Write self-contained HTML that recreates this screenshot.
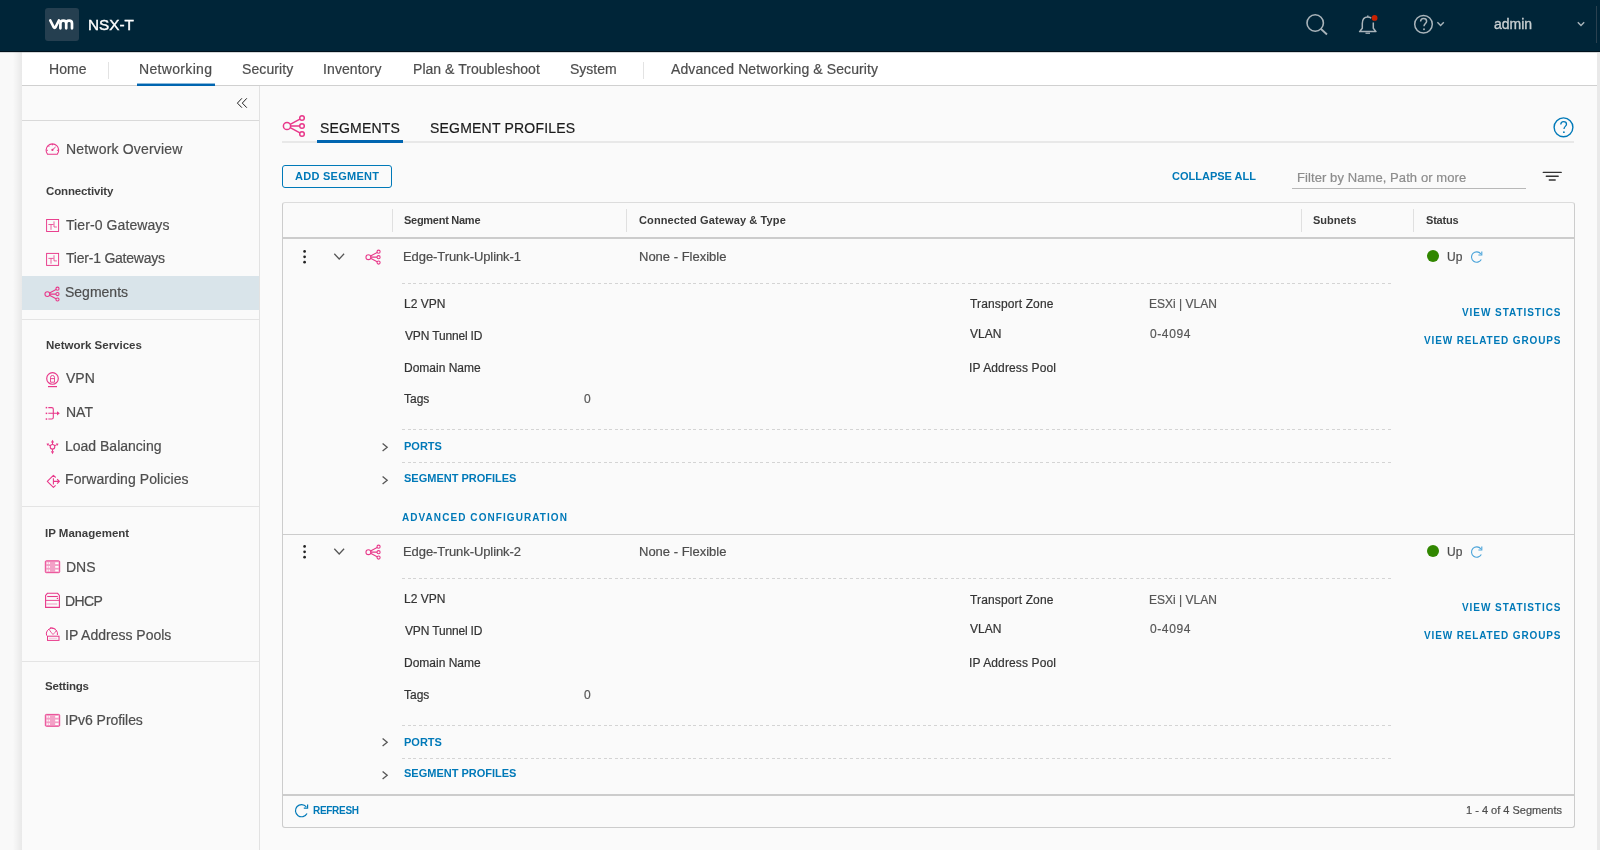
<!DOCTYPE html>
<html><head><meta charset="utf-8"><style>
html,body{margin:0;padding:0;}
body{width:1600px;height:850px;overflow:hidden;position:relative;background:#fafafa;font-family:"Liberation Sans",sans-serif;}
.t{position:absolute;white-space:nowrap;line-height:1;will-change:transform;}
.r{position:absolute;display:block;}
</style></head><body>
<div class="r" style="left:0px;top:0px;width:1600px;height:51px;background:#002538;"></div>
<div class="r" style="left:0px;top:51px;width:1600px;height:1px;background:#00111c;"></div>
<div class="r" style="left:45px;top:8px;width:34px;height:33px;background:#253f50;border-radius:3px;"></div>
<svg class="r" style="left:44px;top:14px" width="36" height="20" viewBox="44 14 36 20"><path d="M50.3 20.5 L53.6 27 Q54.6 28.6 55.6 27 L58.9 20.5" fill="none" stroke="#fff" stroke-width="2.7" stroke-linecap="round" stroke-linejoin="round"/><path d="M60.4 28.3 V23.4 Q60.4 20.6 63.3 20.6 Q66.2 20.6 66.2 23.4 V28.3 M66.2 23.4 Q66.2 20.6 69.1 20.6 Q72 20.6 72 23.4 V28.3" fill="none" stroke="#fff" stroke-width="2.7" stroke-linecap="round"/></svg>
<div class="t" style="top:16.55px;font-size:15.3px;color:#ffffff;left:87.50px;-webkit-text-stroke:0.4px #fff;">NSX-T</div>
<svg class="r" style="left:1300px;top:8px" width="36" height="32" viewBox="1300 8 36 32"><circle cx="1315.2" cy="23" r="8.2" fill="none" stroke="#a9b4ba" stroke-width="1.6"/><line x1="1321" y1="29" x2="1327" y2="34.5" stroke="#a9b4ba" stroke-width="1.8"/></svg>
<svg class="r" style="left:1350px;top:8px" width="36" height="32" viewBox="1350 8 36 32"><path d="M1367.8 15.6 V16.9 M1371.2 18.2 C1370.2 17.4 1369.1 17 1367.8 17 C1364.2 17 1362.3 19.8 1362.3 23.6 V28.2 L1359.6 31.6 H1376 L1373.3 28.2 V22.6" fill="none" stroke="#a9b4ba" stroke-width="1.5" stroke-linejoin="round"/><line x1="1365.5" y1="33.2" x2="1370" y2="33.2" stroke="#a9b4ba" stroke-width="1.3"/><circle cx="1374.6" cy="17.9" r="2.9" fill="#c92100"/></svg>
<svg class="r" style="left:1405px;top:8px" width="45" height="32" viewBox="1405 8 45 32"><circle cx="1423.5" cy="24.3" r="8.8" fill="none" stroke="#a9b4ba" stroke-width="1.5"/><path d="M1420.6 21.6 C1420.6 19.4 1422 18.5 1423.6 18.5 C1425.4 18.5 1426.6 19.7 1426.6 21.2 C1426.6 23.4 1424 23.6 1424 26.2" fill="none" stroke="#a9b4ba" stroke-width="1.5"/><circle cx="1424" cy="29.2" r="0.95" fill="#a9b4ba"/><path d="M1437.4 22.3 L1440.6 25.6 L1443.8 22.3" fill="none" stroke="#a9b4ba" stroke-width="1.4"/></svg>
<div class="t" style="top:17.05px;font-size:14px;color:#c7ced1;left:1493.50px;-webkit-text-stroke:0.35px #c7ced1;">admin</div>
<svg class="r" style="left:1570px;top:15px" width="20" height="20" viewBox="1570 15 20 20"><path d="M1577.8 22.2 L1581 25.6 L1584.2 22.2" fill="none" stroke="#a9b4ba" stroke-width="1.4"/></svg>
<div class="r" style="left:1596px;top:6px;width:1px;height:37px;background:#2a4150;"></div>
<div class="r" style="left:0px;top:52px;width:22px;height:798px;background:#f9f9f9;"></div>
<div class="r" style="left:1597px;top:52px;width:3px;height:798px;background:#e9e9e9;"></div>
<div class="r" style="left:22px;top:52px;width:1575px;height:33px;background:#ffffff;"></div>
<div class="r" style="left:0px;top:52px;width:1600px;height:1px;background:#d4d8d9;"></div>
<div class="r" style="left:22px;top:85px;width:1575px;height:1px;background:#d0d0d0;"></div>
<div class="r" style="left:22px;top:86px;width:1575px;height:764px;background:#fafafa;"></div>
<div class="r" style="left:13px;top:52px;width:9px;height:798px;background:linear-gradient(to right, rgba(0,0,0,0), rgba(0,0,0,0.065));"></div>
<div class="t" style="top:62.15px;font-size:14px;color:#4d4d4d;-webkit-text-stroke:0.2px #4d4d4d;letter-spacing:0.1px;left:48.50px;">Home</div>
<div class="t" style="top:62.15px;font-size:14px;color:#4d4d4d;-webkit-text-stroke:0.2px #4d4d4d;letter-spacing:0.33px;left:139.10px;">Networking</div>
<div class="t" style="top:62.15px;font-size:14px;color:#4d4d4d;-webkit-text-stroke:0.2px #4d4d4d;letter-spacing:0.1px;left:242.00px;">Security</div>
<div class="t" style="top:62.15px;font-size:14px;color:#4d4d4d;-webkit-text-stroke:0.2px #4d4d4d;letter-spacing:0.1px;left:323.20px;">Inventory</div>
<div class="t" style="top:62.15px;font-size:14px;color:#4d4d4d;-webkit-text-stroke:0.2px #4d4d4d;letter-spacing:0.04px;left:412.60px;">Plan &amp; Troubleshoot</div>
<div class="t" style="top:62.15px;font-size:14px;color:#4d4d4d;-webkit-text-stroke:0.2px #4d4d4d;left:570.00px;">System</div>
<div class="t" style="top:62.15px;font-size:14px;color:#4d4d4d;-webkit-text-stroke:0.2px #4d4d4d;letter-spacing:0.11px;left:670.80px;">Advanced Networking &amp; Security</div>
<div class="r" style="left:108px;top:62px;width:1px;height:17px;background:#e3e3e3;"></div>
<div class="r" style="left:643px;top:62px;width:1px;height:17px;background:#e3e3e3;"></div>
<div class="r" style="left:137px;top:84px;width:78px;height:2px;background:#0065b0;"></div>
<div class="r" style="left:137px;top:83px;width:78px;height:1px;background:rgba(0,101,176,0.45);"></div>
<div class="r" style="left:259px;top:86px;width:1px;height:764px;background:#e2e2e2;"></div>
<div class="r" style="left:22px;top:120px;width:237px;height:1px;background:#d9d9d9;"></div>
<svg class="r" style="left:230px;top:93px" width="22" height="20" viewBox="230 93 22 20"><path d="M241.9 98.3 L237.4 103.1 L241.9 107.7 M246.8 98.3 L242.3 103.1 L246.8 107.7" fill="none" stroke="#222" stroke-width="1.0"/></svg>
<div class="r" style="left:22px;top:276px;width:237px;height:34px;background:#d9e4ea;"></div>
<svg class="r" style="left:44.46px;top:285.56px" width="16.2" height="16.2" viewBox="0 0 24 24"><g fill="none" stroke="#e8388a" stroke-width="1.6"><circle cx="5" cy="12" r="3.6"/><circle cx="20" cy="4" r="2.3"/><circle cx="20" cy="12" r="2.3"/><circle cx="20" cy="20" r="2.3"/><path d="M8.2 10.3 L17.9 5.1 M8.6 12 L17.7 12 M8.2 13.7 L17.9 18.9"/></g></svg>
<div class="r" style="left:22px;top:319px;width:237px;height:1px;background:#e4e4e4;"></div>
<div class="r" style="left:22px;top:506px;width:237px;height:1px;background:#e4e4e4;"></div>
<div class="r" style="left:22px;top:661px;width:237px;height:1px;background:#e4e4e4;"></div>
<div class="t" style="top:141.95px;font-size:14px;color:#4d4d4d;-webkit-text-stroke:0.2px #4d4d4d;letter-spacing:0.19px;left:65.50px;">Network Overview</div>
<div class="t" style="top:185.97px;font-size:11.5px;color:#3d3d3d;font-weight:700;letter-spacing:-0.15px;left:46.00px;">Connectivity</div>
<div class="t" style="top:217.55px;font-size:14px;color:#4d4d4d;-webkit-text-stroke:0.2px #4d4d4d;letter-spacing:0.09px;left:66.10px;">Tier-0 Gateways</div>
<div class="t" style="top:251.35px;font-size:14px;color:#4d4d4d;-webkit-text-stroke:0.2px #4d4d4d;letter-spacing:-0.22px;left:66.10px;">Tier-1 Gateways</div>
<div class="t" style="top:285.15px;font-size:14px;color:#4d4d4d;-webkit-text-stroke:0.2px #4d4d4d;left:65.20px;">Segments</div>
<div class="t" style="top:339.67px;font-size:11.5px;color:#3d3d3d;font-weight:700;left:45.60px;">Network Services</div>
<div class="t" style="top:371.45px;font-size:14px;color:#4d4d4d;-webkit-text-stroke:0.2px #4d4d4d;left:66.00px;">VPN</div>
<div class="t" style="top:405.15px;font-size:14px;color:#4d4d4d;-webkit-text-stroke:0.2px #4d4d4d;left:66.00px;">NAT</div>
<div class="t" style="top:438.65px;font-size:14px;color:#4d4d4d;-webkit-text-stroke:0.2px #4d4d4d;left:65.20px;">Load Balancing</div>
<div class="t" style="top:472.15px;font-size:14px;color:#4d4d4d;-webkit-text-stroke:0.2px #4d4d4d;letter-spacing:0.08px;left:65.20px;">Forwarding Policies</div>
<div class="t" style="top:527.57px;font-size:11.5px;color:#3d3d3d;font-weight:700;left:44.60px;">IP Management</div>
<div class="t" style="top:559.95px;font-size:14px;color:#4d4d4d;-webkit-text-stroke:0.2px #4d4d4d;left:65.90px;">DNS</div>
<div class="t" style="top:593.55px;font-size:14px;color:#4d4d4d;-webkit-text-stroke:0.2px #4d4d4d;letter-spacing:-0.6px;left:65.00px;">DHCP</div>
<div class="t" style="top:627.75px;font-size:14px;color:#4d4d4d;-webkit-text-stroke:0.2px #4d4d4d;left:65.00px;">IP Address Pools</div>
<div class="t" style="top:681.27px;font-size:11.5px;color:#3d3d3d;font-weight:700;letter-spacing:-0.2px;left:45.40px;">Settings</div>
<div class="t" style="top:713.45px;font-size:14px;color:#4d4d4d;-webkit-text-stroke:0.2px #4d4d4d;letter-spacing:-0.06px;left:65.20px;">IPv6 Profiles</div>
<div class="r" style="left:282px;top:141px;width:1292px;height:2px;background:#e8e8e8;"></div>
<div class="r" style="left:317px;top:140px;width:86px;height:3px;background:#0065b0;"></div>
<div class="t" style="top:121.05px;font-size:14px;color:#1b1b1b;-webkit-text-stroke:0.2px #1b1b1b;letter-spacing:0.17px;left:320.20px;">SEGMENTS</div>
<div class="t" style="top:121.05px;font-size:14px;color:#1b1b1b;-webkit-text-stroke:0.2px #1b1b1b;letter-spacing:0.2px;left:430.00px;">SEGMENT PROFILES</div>
<svg class="r" style="left:1550px;top:114px" width="28" height="28" viewBox="1550 114 28 28"><circle cx="1563.5" cy="127.3" r="9.4" fill="none" stroke="#0079b8" stroke-width="1.4"/><path d="M1560.8 124.6 C1560.8 122.4 1562.2 121.6 1563.6 121.6 C1565.3 121.6 1566.5 122.8 1566.5 124.2 C1566.5 126.4 1564 126.4 1564 128.9" fill="none" stroke="#0079b8" stroke-width="1.3"/><circle cx="1563.9" cy="132.2" r="0.9" fill="#0079b8"/></svg>
<div class="r" style="left:282px;top:165px;width:108px;height:21px;border:1px solid #0079b8;border-radius:3px"></div>
<div class="t" style="top:170.99px;font-size:11px;color:#0079b8;font-weight:700;letter-spacing:0.27px;left:294.50px;">ADD SEGMENT</div>
<div class="t" style="top:170.79px;font-size:11px;color:#0079b8;font-weight:700;left:1171.50px;">COLLAPSE ALL</div>
<div class="t" style="top:170.70px;font-size:13px;color:#8c8c8c;-webkit-text-stroke:0.2px #8c8c8c;letter-spacing:0.085px;left:1297.00px;">Filter by Name, Path or more</div>
<div class="r" style="left:1292px;top:188px;width:234px;height:1px;background:#b8b8b8;"></div>
<svg class="r" style="left:1538px;top:166px" width="28" height="20" viewBox="1538 166 28 20"><path d="M1543.3 172.4 H1561.2 M1546.3 176.2 H1558.2 M1549.3 180 H1555.2" stroke="#333" stroke-width="1.4" stroke-linecap="round"/></svg>
<div class="r" style="left:282px;top:202px;width:1291px;height:624px;border:1px solid #cccccc;border-top-color:#dcdcdc;border-radius:3px"></div>
<div class="r" style="left:283px;top:237px;width:1291px;height:2px;background:#cccccc;"></div>
<div class="r" style="left:392px;top:209px;width:1px;height:23px;background:#e0e0e0;"></div>
<div class="r" style="left:626px;top:209px;width:1px;height:23px;background:#e0e0e0;"></div>
<div class="r" style="left:1301px;top:209px;width:1px;height:23px;background:#e0e0e0;"></div>
<div class="r" style="left:1413px;top:209px;width:1px;height:23px;background:#e0e0e0;"></div>
<div class="t" style="top:214.69px;font-size:11px;color:#3a3a3a;font-weight:700;letter-spacing:-0.27px;left:404.45px;">Segment Name</div>
<div class="t" style="top:214.69px;font-size:11px;color:#3a3a3a;font-weight:700;letter-spacing:0.12px;left:638.55px;">Connected Gateway &amp; Type</div>
<div class="t" style="top:214.69px;font-size:11px;color:#3a3a3a;font-weight:700;left:1313.10px;">Subnets</div>
<div class="t" style="top:214.69px;font-size:11px;color:#3a3a3a;font-weight:700;letter-spacing:-0.2px;left:1426.20px;">Status</div>
<div class="r" style="left:283px;top:534px;width:1291px;height:1px;background:#cccccc;"></div>
<div class="r" style="left:283px;top:794px;width:1291px;height:2px;background:#cccccc;"></div>
<svg class="r" style="left:300px;top:248px" width="10" height="18" viewBox="300 248 10 18"><g fill="#222"><circle cx="304.6" cy="251.4" r="1.35"/><circle cx="304.6" cy="256.8" r="1.35"/><circle cx="304.6" cy="262.2" r="1.35"/></g></svg>
<svg class="r" style="left:330px;top:248px" width="18" height="16" viewBox="330 248 18 16"><path d="M334.3 253.8 L339.2 259 L344.1 253.8" fill="none" stroke="#565656" stroke-width="1.3"/></svg>
<svg class="r" style="left:365.06px;top:248.65px" width="16.3" height="16.3" viewBox="0 0 24 24"><g fill="none" stroke="#e8388a" stroke-width="1.6"><circle cx="5" cy="12" r="3.6"/><circle cx="20" cy="4" r="2.3"/><circle cx="20" cy="12" r="2.3"/><circle cx="20" cy="20" r="2.3"/><path d="M8.2 10.3 L17.9 5.1 M8.6 12 L17.7 12 M8.2 13.7 L17.9 18.9"/></g></svg>
<div class="t" style="top:249.70px;font-size:13px;color:#4d4d4d;-webkit-text-stroke:0.2px #4d4d4d;letter-spacing:-0.08px;left:403.45px;">Edge-Trunk-Uplink-1</div>
<div class="t" style="top:249.70px;font-size:13px;color:#4d4d4d;-webkit-text-stroke:0.2px #4d4d4d;left:638.75px;">None - Flexible</div>
<div class="r" style="left:1427.2px;top:249.7px;width:12px;height:12px;background:#318700;border-radius:50%;"></div>
<div class="t" style="top:250.74px;font-size:12px;color:#4d4d4d;-webkit-text-stroke:0.2px #4d4d4d;letter-spacing:0.15px;left:1447.30px;">Up</div>
<svg class="r" style="left:1467.2px;top:249px" width="18" height="16" viewBox="1468 249 18 16"><path d="M1481.8 253.8 A5.2 5.2 0 1 0 1482.3 259.5" fill="none" stroke="#49a3d9" stroke-width="1.1"/><path d="M1482.8 251.6 L1482.8 255 L1479.4 255" fill="none" stroke="#49a3d9" stroke-width="1.1"/></svg>
<div class="r" style="left:402px;top:283px;width:991px;height:1px;background:repeating-linear-gradient(to right,#d4d4d4 0,#d4d4d4 3px,transparent 3px,transparent 5.6px);"></div>
<div class="t" style="top:298.14px;font-size:12px;color:#333333;-webkit-text-stroke:0.2px #333333;left:403.60px;">L2 VPN</div>
<div class="t" style="top:329.74px;font-size:12px;color:#333333;-webkit-text-stroke:0.2px #333333;letter-spacing:-0.16px;left:404.60px;">VPN Tunnel ID</div>
<div class="t" style="top:361.84px;font-size:12px;color:#333333;-webkit-text-stroke:0.2px #333333;left:403.60px;">Domain Name</div>
<div class="t" style="top:393.34px;font-size:12px;color:#333333;-webkit-text-stroke:0.2px #333333;left:404.30px;">Tags</div>
<div class="t" style="top:393.34px;font-size:12px;color:#565656;-webkit-text-stroke:0.2px #565656;left:584.20px;">0</div>
<div class="t" style="top:298.24px;font-size:12px;color:#333333;-webkit-text-stroke:0.2px #333333;letter-spacing:0.14px;left:970.40px;">Transport Zone</div>
<div class="t" style="top:298.24px;font-size:12px;color:#565656;-webkit-text-stroke:0.2px #565656;left:1148.80px;">ESXi | VLAN</div>
<div class="t" style="top:327.94px;font-size:12px;color:#333333;-webkit-text-stroke:0.2px #333333;left:970.20px;">VLAN</div>
<div class="t" style="top:327.94px;font-size:12px;color:#565656;-webkit-text-stroke:0.2px #565656;letter-spacing:0.6px;left:1149.90px;">0-4094</div>
<div class="t" style="top:361.74px;font-size:12px;color:#333333;-webkit-text-stroke:0.2px #333333;letter-spacing:0.13px;left:969.20px;">IP Address Pool</div>
<div class="t" style="top:307.54px;font-size:10px;color:#0079b8;font-weight:700;letter-spacing:0.95px;right:38.40px;">VIEW STATISTICS</div>
<div class="t" style="top:335.64px;font-size:10px;color:#0079b8;font-weight:700;letter-spacing:0.86px;right:38.40px;">VIEW RELATED GROUPS</div>
<div class="r" style="left:402px;top:429px;width:991px;height:1px;background:repeating-linear-gradient(to right,#d4d4d4 0,#d4d4d4 3px,transparent 3px,transparent 5.6px);"></div>
<div class="r" style="left:402px;top:462px;width:991px;height:1px;background:repeating-linear-gradient(to right,#d4d4d4 0,#d4d4d4 3px,transparent 3px,transparent 5.6px);"></div>
<svg class="r" style="left:378px;top:441px" width="14" height="14" viewBox="378 441 14 14"><path d="M382.6 443.4 L387.2 447.2 L382.6 451" fill="none" stroke="#565656" stroke-width="1.3"/></svg>
<svg class="r" style="left:378px;top:473.8px" width="14" height="14" viewBox="378 473.8 14 14"><path d="M382.6 476.2 L387.2 480.0 L382.6 483.8" fill="none" stroke="#565656" stroke-width="1.3"/></svg>
<div class="t" style="top:440.59px;font-size:11px;color:#0079b8;font-weight:700;left:404.30px;">PORTS</div>
<div class="t" style="top:473.09px;font-size:11px;color:#0079b8;font-weight:700;left:404.30px;">SEGMENT PROFILES</div>
<div class="t" style="top:512.53px;font-size:10px;color:#0079b8;font-weight:700;letter-spacing:1.07px;left:402.20px;">ADVANCED CONFIGURATION</div>
<svg class="r" style="left:300px;top:543.3px" width="10" height="18" viewBox="300 248 10 18"><g fill="#222"><circle cx="304.6" cy="251.4" r="1.35"/><circle cx="304.6" cy="256.8" r="1.35"/><circle cx="304.6" cy="262.2" r="1.35"/></g></svg>
<svg class="r" style="left:330px;top:543.3px" width="18" height="16" viewBox="330 248 18 16"><path d="M334.3 253.8 L339.2 259 L344.1 253.8" fill="none" stroke="#565656" stroke-width="1.3"/></svg>
<svg class="r" style="left:365.06px;top:543.95px" width="16.3" height="16.3" viewBox="0 0 24 24"><g fill="none" stroke="#e8388a" stroke-width="1.6"><circle cx="5" cy="12" r="3.6"/><circle cx="20" cy="4" r="2.3"/><circle cx="20" cy="12" r="2.3"/><circle cx="20" cy="20" r="2.3"/><path d="M8.2 10.3 L17.9 5.1 M8.6 12 L17.7 12 M8.2 13.7 L17.9 18.9"/></g></svg>
<div class="t" style="top:545.00px;font-size:13px;color:#4d4d4d;-webkit-text-stroke:0.2px #4d4d4d;letter-spacing:-0.08px;left:403.45px;">Edge-Trunk-Uplink-2</div>
<div class="t" style="top:545.00px;font-size:13px;color:#4d4d4d;-webkit-text-stroke:0.2px #4d4d4d;left:638.75px;">None - Flexible</div>
<div class="r" style="left:1427.2px;top:545.0px;width:12px;height:12px;background:#318700;border-radius:50%;"></div>
<div class="t" style="top:546.04px;font-size:12px;color:#4d4d4d;-webkit-text-stroke:0.2px #4d4d4d;letter-spacing:0.15px;left:1447.30px;">Up</div>
<svg class="r" style="left:1467.2px;top:544.3px" width="18" height="16" viewBox="1468 249 18 16"><path d="M1481.8 253.8 A5.2 5.2 0 1 0 1482.3 259.5" fill="none" stroke="#49a3d9" stroke-width="1.1"/><path d="M1482.8 251.6 L1482.8 255 L1479.4 255" fill="none" stroke="#49a3d9" stroke-width="1.1"/></svg>
<div class="r" style="left:402px;top:578.3px;width:991px;height:1px;background:repeating-linear-gradient(to right,#d4d4d4 0,#d4d4d4 3px,transparent 3px,transparent 5.6px);"></div>
<div class="t" style="top:593.44px;font-size:12px;color:#333333;-webkit-text-stroke:0.2px #333333;left:403.60px;">L2 VPN</div>
<div class="t" style="top:625.04px;font-size:12px;color:#333333;-webkit-text-stroke:0.2px #333333;letter-spacing:-0.16px;left:404.60px;">VPN Tunnel ID</div>
<div class="t" style="top:657.14px;font-size:12px;color:#333333;-webkit-text-stroke:0.2px #333333;left:403.60px;">Domain Name</div>
<div class="t" style="top:688.64px;font-size:12px;color:#333333;-webkit-text-stroke:0.2px #333333;left:404.30px;">Tags</div>
<div class="t" style="top:688.64px;font-size:12px;color:#565656;-webkit-text-stroke:0.2px #565656;left:584.20px;">0</div>
<div class="t" style="top:593.54px;font-size:12px;color:#333333;-webkit-text-stroke:0.2px #333333;letter-spacing:0.14px;left:970.40px;">Transport Zone</div>
<div class="t" style="top:593.54px;font-size:12px;color:#565656;-webkit-text-stroke:0.2px #565656;left:1148.80px;">ESXi | VLAN</div>
<div class="t" style="top:623.24px;font-size:12px;color:#333333;-webkit-text-stroke:0.2px #333333;left:970.20px;">VLAN</div>
<div class="t" style="top:623.24px;font-size:12px;color:#565656;-webkit-text-stroke:0.2px #565656;letter-spacing:0.6px;left:1149.90px;">0-4094</div>
<div class="t" style="top:657.04px;font-size:12px;color:#333333;-webkit-text-stroke:0.2px #333333;letter-spacing:0.13px;left:969.20px;">IP Address Pool</div>
<div class="t" style="top:602.83px;font-size:10px;color:#0079b8;font-weight:700;letter-spacing:0.95px;right:38.40px;">VIEW STATISTICS</div>
<div class="t" style="top:630.94px;font-size:10px;color:#0079b8;font-weight:700;letter-spacing:0.86px;right:38.40px;">VIEW RELATED GROUPS</div>
<div class="r" style="left:402px;top:725px;width:991px;height:1px;background:repeating-linear-gradient(to right,#d4d4d4 0,#d4d4d4 3px,transparent 3px,transparent 5.6px);"></div>
<div class="r" style="left:402px;top:758px;width:991px;height:1px;background:repeating-linear-gradient(to right,#d4d4d4 0,#d4d4d4 3px,transparent 3px,transparent 5.6px);"></div>
<svg class="r" style="left:378px;top:736.3px" width="14" height="14" viewBox="378 441 14 14"><path d="M382.6 443.4 L387.2 447.2 L382.6 451" fill="none" stroke="#565656" stroke-width="1.3"/></svg>
<svg class="r" style="left:378px;top:769.1px" width="14" height="14" viewBox="378 473.8 14 14"><path d="M382.6 476.2 L387.2 480.0 L382.6 483.8" fill="none" stroke="#565656" stroke-width="1.3"/></svg>
<div class="t" style="top:736.59px;font-size:11px;color:#0079b8;font-weight:700;left:404.30px;">PORTS</div>
<div class="t" style="top:768.39px;font-size:11px;color:#0079b8;font-weight:700;left:404.30px;">SEGMENT PROFILES</div>
<svg class="r" style="left:292px;top:801px" width="20" height="20" viewBox="292 801 20 20"><path d="M306.3 806.8 A6.1 6.1 0 1 0 307 813.4" fill="none" stroke="#0079b8" stroke-width="1.2"/><path d="M307.6 804.4 L307.6 808.2 L303.8 808.2" fill="none" stroke="#0079b8" stroke-width="1.2"/></svg>
<div class="t" style="top:805.63px;font-size:10px;color:#0079b8;font-weight:700;letter-spacing:-0.3px;left:313.20px;">REFRESH</div>
<div class="t" style="top:805.09px;font-size:11px;color:#4d4d4d;-webkit-text-stroke:0.2px #4d4d4d;right:37.70px;">1 - 4 of 4 Segments</div>
<svg class="r" style="left:281.55px;top:114.35px" width="24" height="24" viewBox="0 0 24 24"><g fill="none" stroke="#e8388a" stroke-width="1.5"><circle cx="5" cy="12" r="3.6"/><circle cx="20" cy="4" r="2.3"/><circle cx="20" cy="12" r="2.3"/><circle cx="20" cy="20" r="2.3"/><path d="M8.2 10.3 L17.9 5.1 M8.6 12 L17.7 12 M8.2 13.7 L17.9 18.9"/></g></svg>
<svg class="r" style="left:30px;top:130px" width="40" height="620" viewBox="30 130 40 620"><path d="M47.6 154.3 A6.3 6.3 0 1 1 57.2 154.3 Z" fill="none" stroke="#e8388a" stroke-width="1.1" stroke-linejoin="round"/><path d="M52.4 149.9 L55.6 147.0" stroke="#e8388a" stroke-width="1"/><circle cx="52.4" cy="149.9" r="1.1" fill="#e8388a"/><path d="M52.4 144 V145.3 M46.6 150.3 H47.9 M56.9 150.3 H58.2 M48.3 145.9 L49.2 146.8" stroke="#e8388a" stroke-width="1"/><g transform="translate(0,0)" fill="none" stroke="#e8388a" stroke-width="0.95"><rect x="46.6" y="219.5" width="12" height="12"/><path d="M48.4 224.5 H53.6 M51 224.5 V229.8 M54 221.4 V227 H56.9" stroke-width="0.8"/></g><g transform="translate(0,33.9)" fill="none" stroke="#e8388a" stroke-width="0.95"><rect x="46.6" y="219.5" width="12" height="12"/><path d="M48.4 224.5 H53.6 M51 224.5 V229.8 M54 221.4 V227 H56.9" stroke-width="0.8"/></g><circle cx="52.5" cy="378.4" r="5.8" fill="none" stroke="#e8388a" stroke-width="1.15"/><path d="M50.5 382.2 V377.3 Q50.5 375.5 52.5 375.5 Q54.5 375.5 54.5 377.3 V382.2 Z M50.5 378.6 H54.5" fill="none" stroke="#e8388a" stroke-width="0.9"/><path d="M48 386.6 H57" stroke="#e8388a" stroke-width="1.2"/><g fill="#e8388a"><rect x="45.7" y="406.9" width="1.5" height="1.5"/><rect x="45.7" y="412.6" width="1.5" height="1.5"/><rect x="45.7" y="418.3" width="1.5" height="1.5"/></g><path d="M48.3 407.6 H51.8 Q53.3 407.6 53.3 409.1 V417.5 Q53.3 419 51.8 419 H48.3 M48.3 413.3 H57.6" fill="none" stroke="#e8388a" stroke-width="1.1"/><path d="M57 411.2 L59.8 413.3 L57 415.4 Z" fill="#e8388a"/><circle cx="52.5" cy="446.8" r="2.3" fill="none" stroke="#e8388a" stroke-width="1.1"/><path d="M52.5 444.5 V442 M52.5 449.1 V451.5 M50.4 445.8 L48.2 444.7 M54.6 445.8 L56.8 444.7" stroke="#e8388a" stroke-width="1"/><path d="M50.9 442.4 L52.5 439.8 L54.1 442.4 Z M50.9 451.2 L52.5 454.3 L54.1 451.2 Z M48.9 443.3 L46.4 443.8 L47.9 446 Z M56.1 443.3 L58.6 443.8 L57.1 446 Z" fill="#e8388a"/><path d="M55.7 477.5 L53.4 475.3 L47.3 481.4 L53.4 487.4 L55.6 485.3 M53.4 478.3 V484.6 M53.4 481.4 H59.2 M57.1 479.1 L59.4 481.4 L57.1 483.7" fill="none" stroke="#e8388a" stroke-width="1.1" stroke-linejoin="round"/><g transform="translate(0,0)"><rect x="45.3" y="560.8" width="14.4" height="11.9" rx="1" fill="#f3a1c7" stroke="#e8388a" stroke-width="0.9"/><g fill="#ffffff"><rect x="46.6" y="562.3" width="1.2" height="1.8"/><rect x="48.6" y="562.3" width="1.3" height="1.8"/><rect x="55.2" y="562.3" width="3.3" height="1.8"/><rect x="46.6" y="566.0" width="1.2" height="1.8"/><rect x="48.6" y="566.0" width="1.3" height="1.8"/><rect x="55.2" y="566.0" width="3.3" height="1.8"/><rect x="46.6" y="569.6" width="1.2" height="1.8"/><rect x="48.6" y="569.6" width="1.3" height="1.8"/><rect x="55.2" y="569.6" width="3.3" height="1.8"/></g></g><g transform="translate(0,153.6)"><rect x="45.3" y="560.8" width="14.4" height="11.9" rx="1" fill="#f3a1c7" stroke="#e8388a" stroke-width="0.9"/><g fill="#ffffff"><rect x="46.6" y="562.3" width="1.2" height="1.8"/><rect x="48.6" y="562.3" width="1.3" height="1.8"/><rect x="55.2" y="562.3" width="3.3" height="1.8"/><rect x="46.6" y="566.0" width="1.2" height="1.8"/><rect x="48.6" y="566.0" width="1.3" height="1.8"/><rect x="55.2" y="566.0" width="3.3" height="1.8"/><rect x="46.6" y="569.6" width="1.2" height="1.8"/><rect x="48.6" y="569.6" width="1.3" height="1.8"/><rect x="55.2" y="569.6" width="3.3" height="1.8"/></g></g><path d="M45.6 607.4 V595.4 L47.4 593.3 H57.6 L59.4 595.4 V607.4 Z" fill="none" stroke="#e8388a" stroke-width="1.1"/><path d="M47.2 596.5 H57.8" stroke="#e8388a" stroke-width="1.1"/><path d="M45.6 600.4 H59.4" stroke="#e8388a" stroke-width="0.9"/><rect x="46.2" y="603.2" width="11" height="1.6" fill="#f6bdd8"/><circle cx="57.4" cy="598.4" r="0.7" fill="#e8388a"/><path d="M46.6 635.6 A5.6 5.6 0 1 1 57.4 635" fill="none" stroke="#e8388a" stroke-width="1"/><path d="M48.8 629 Q51 632.5 53 634.5 M50 627.6 Q53 627.4 55.8 629.4 M53 634.5 Q55.5 632 56.5 630.5" fill="none" stroke="#e8388a" stroke-width="0.8"/><rect x="47.5" y="636.2" width="11.5" height="4.2" fill="none" stroke="#e8388a" stroke-width="1"/><path d="M49 638.3 H57" stroke="#f6bdd8" stroke-width="0.9"/></svg>
</body></html>
